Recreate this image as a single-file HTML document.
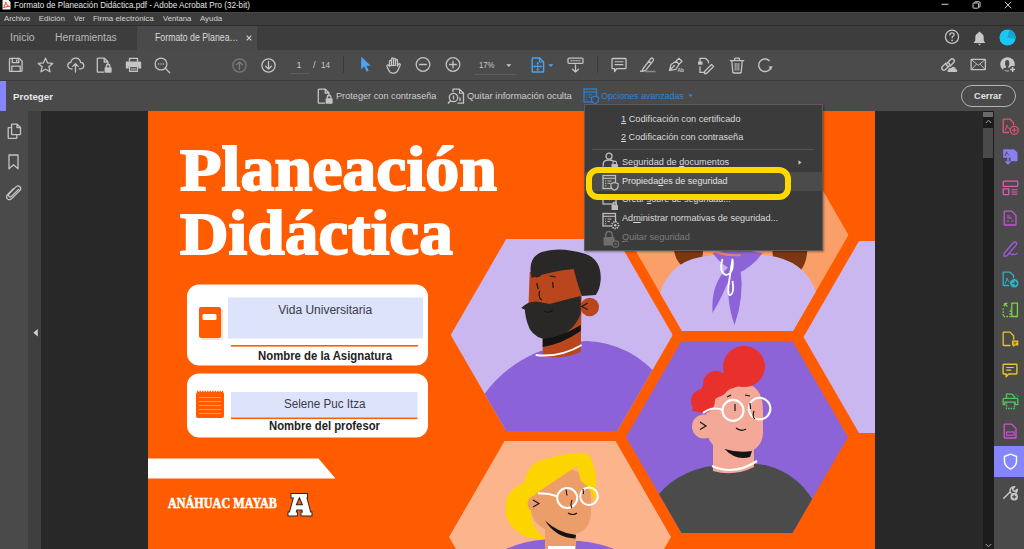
<!DOCTYPE html>
<html><head><meta charset="utf-8">
<style>
*{margin:0;padding:0;box-sizing:border-box}
html,body{width:1024px;height:549px;overflow:hidden;background:#282828;font-family:"Liberation Sans",sans-serif;position:relative}
.a{position:absolute}
.t{position:absolute;white-space:nowrap;line-height:1;transform-origin:0 0}
svg{position:absolute;overflow:visible}
.lc{display:inline-block;transform:scaleY(1.07);transform-origin:0 84%}
.ic{fill:none;stroke:#c4c4c4;stroke-width:1.3;stroke-linecap:round;stroke-linejoin:round}
</style></head><body>
<!-- title bar -->
<div class="a" style="left:0;top:0;width:1024px;height:12px;background:#000"></div>
<!-- menu bar -->
<div class="a" style="left:0;top:12px;width:1024px;height:13px;background:#3c3c3c"></div>
<div class="a" style="left:0;top:12px;width:1024px;height:1px;background:#484848"></div>
<div class="a" style="left:0;top:25px;width:1024px;height:1px;background:#2f2f2f"></div>
<!-- tab bar -->
<div class="a" style="left:0;top:26px;width:1024px;height:24px;background:#3d3d3d"></div>
<div class="a" style="left:137px;top:26px;width:120px;height:24px;background:#4a4a4a"></div>
<!-- toolbar -->
<div class="a" style="left:0;top:50px;width:1024px;height:30px;background:#4b4b4b"></div>
<div class="a" style="left:0;top:80px;width:1024px;height:1px;background:#3c3c3c"></div>
<!-- protect bar -->
<div class="a" style="left:0;top:81px;width:1024px;height:30px;background:#4a4a4a"></div>
<div class="a" style="left:0;top:81px;width:6px;height:30px;background:#8585ff"></div>
<!-- left sidebar -->
<div class="a" style="left:0;top:111px;width:28px;height:438px;background:#4a4a4a"></div>
<div class="a" style="left:28px;top:111px;width:13px;height:438px;background:#3f3f3f"></div>
<!-- scrollbar -->
<div class="a" style="left:982.5px;top:111px;width:12px;height:438px;background:#1c1c1c"></div>
<div class="a" style="left:983px;top:111.5px;width:10px;height:5px;background:#6a6a6a"></div>
<div class="a" style="left:983px;top:128.3px;width:10px;height:29.5px;background:#4a4a4a"></div>
<!-- right sidebar -->
<div class="a" style="left:994px;top:111px;width:30px;height:438px;background:#4a4a4a"></div>
<div class="a" style="left:994px;top:446px;width:30px;height:31px;background:#8585ff"></div>
<!-- page -->
<div class="a" style="left:148px;top:111px;width:727px;height:438px;background:#ff5b00"></div>
<svg style="left:0;top:0" width="1024" height="549" viewBox="0 0 1024 549">
<defs>
<clipPath id="pg"><rect x="148" y="111" width="727" height="438"/></clipPath>
<clipPath id="c1"><polygon points="449.0,335.0 504.5,239.0 615.5,239.0 671.0,335.0 615.5,431.0 504.5,431.0"/></clipPath>
<clipPath id="c2"><polygon points="626.0,234.0 681.5,138.0 792.5,138.0 848.0,234.0 792.5,330.0 681.5,330.0"/></clipPath>
<clipPath id="c3"><polygon points="626.0,436.0 681.5,340.0 792.5,340.0 848.0,436.0 792.5,532.0 681.5,532.0"/></clipPath>
<clipPath id="c4"><polygon points="449.0,537.0 504.5,441.0 615.5,441.0 671.0,537.0 615.5,633.0 504.5,633.0"/></clipPath>
</defs>
<g clip-path="url(#pg)">
<!-- hex 5 right lavender -->
<polygon transform="translate(0.5,2)" points="803.0,335.0 858.5,239.0 969.5,239.0 1025.0,335.0 969.5,431.0 858.5,431.0" fill="#cbb7f0"/>
<!-- hex 1: bearded man -->
<g transform="translate(1.7,0)"><g clip-path="url(#c1)">
<rect x="440" y="230" width="240" height="210" fill="#cbb7f0"/>
<path d="M462 440 Q478 378 534 353 Q558 342 585 341 Q630 343 660 380 Q684 410 690 440 Z" fill="#8c62d8"/>
<path d="M528 272 Q550 266 574 266 L580 296 L579 352 Q560 360 541 356 L541 336 Q524 330 527 300 Z" fill="#b9461d"/>
<circle cx="588" cy="307" r="9.3" fill="#b9461d"/>
<path d="M586 303l-6 3.5 6 3" fill="none" stroke="#1e1e1e" stroke-width="1.2"/>
<path d="M530 278 Q525 258 540 252 Q558 246 584 254 Q600 260 599 280 Q598 290 594 295 L580 296 Q575 282 572 269 Q550 271 530 278 Z" fill="#2a2827"/>
<path d="M523 306 Q535 300 548 304 Q562 300 579 296 L579 314 Q572 332 552 339 Q535 341 528 329 Q523 318 523 306 Z" fill="#2a2827"/>
<path d="M519.5 308 Q528 300 538 302 Q545 305 549 304 Q540 313 528 312 Z" fill="#2a2827"/>
<path d="M541 347 L541 339 Q560 337 579 325 L579 331 Q560 344 541 347 Z" fill="#141414"/>
<path d="M534 355 Q558 358 580 345" fill="none" stroke="#fff" stroke-width="2"/>
<path d="M535 283l1.5 6M551 282l0.5 6M534 277l5-1.5M548 276l6 1M538 291q-2 6 2 9M542 311q5 3 9-1" fill="none" stroke="#141414" stroke-width="1.1"/>
</g>
</g>
<!-- hex 2: woman with bandana -->
<g transform="translate(0.5,1)"><g clip-path="url(#c2)">
<rect x="620" y="130" width="240" height="210" fill="#fb9f68"/>
<path d="M672 240 Q674 268 692 268 Q705 264 702 240 Z" fill="#7d3612"/>
<path d="M807 240 Q808 274 788 274 Q770 272 772 240 Z" fill="#7d3612"/>
<path d="M718 240h40v20h-40z" fill="#f2a08a"/>
<path d="M655 340 L657 300 Q666 262 700 256 Q738 249 776 256 Q810 264 818 300 L820 340 Z" fill="#cbb7f0"/>
<path d="M712 252 Q736 246 762 252 Q752 266 738 272 Q722 266 712 252 Z" fill="#8d63d8"/>
<path d="M728 266 Q710 282 712 312 Q722 296 732 270 Z M730 266 Q724 296 734 324 Q744 296 740 268 Z" fill="#8d63d8"/>
<path d="M716 251 Q725 255 740 254" fill="none" stroke="#e88070" stroke-width="2"/>
<path d="M722 258 Q718 272 726 274 Q734 272 732 258 Q730 270 728 285 Q727 295 730 294 Q734 292 732 280" fill="none" stroke="#fff" stroke-width="1.8"/>
</g>
</g>
<!-- hex 3: red hair man -->
<g transform="translate(0,1)"><g clip-path="url(#c3)">
<rect x="620" y="330" width="240" height="210" fill="#8c64d8"/>
<path d="M640 540 Q648 480 705 466 Q735 460 765 464 Q815 476 828 540 Z" fill="#4b4b4b"/>
<path d="M713 430h41v36q-20 10-41 4z" fill="#f3a898"/>
<path d="M712 465 Q734 475 757 460" fill="none" stroke="#fff" stroke-width="2.2"/>
<path d="M706 410 Q712 383 740 382 Q763 382 763 410 L763 432 Q762 452 738 452 Q714 452 708 436 Z" fill="#f3a898"/>
<circle cx="704" cy="425.5" r="12" fill="#f3a898"/>
<path d="M700 421l6 4-6 3.5" fill="none" stroke="#1e1e1e" stroke-width="1.3"/>
<path d="M724.5 448 Q738 452 752 450 L750 456 Q736 460 724.5 448 Z" fill="#141414"/>
<ellipse cx="744" cy="365.5" rx="21" ry="20.5" fill="#e8302c"/>
<circle cx="716" cy="383" r="13" fill="#e8302c"/>
<circle cx="703" cy="400" r="12" fill="#e8302c"/>
<path d="M692 410 Q700 376 725 372 L745 384 Q730 386 722 394 Q712 398 706 412 Z" fill="#e8302c"/>
<circle cx="733" cy="409.4" r="10.5" fill="none" stroke="#fff" stroke-width="2.1"/>
<circle cx="759.6" cy="407.6" r="10.8" fill="none" stroke="#fff" stroke-width="2.1"/>
<path d="M703 412 Q712 405 723 409" fill="none" stroke="#fff" stroke-width="2.1"/>
<path d="M735 403v7M750 402l0.5 6M727 396l4-2M745 394l5 1M754 410q-2 6 1 8M736 427q5 4 10 1" fill="none" stroke="#141414" stroke-width="1.2"/>
</g>
</g>
<!-- hex 4: blonde woman -->
<g clip-path="url(#c4)">
<rect x="440" y="430" width="240" height="210" fill="#fbb48b"/>
<path d="M506 549 Q524 541 545 539.5 L579.5 541 Q600 543 614 549 Z" fill="#8d63d8"/>
<path d="M545 515h31v35h-31z" fill="#eb9e6a"/>
<path d="M548 547.5h27" stroke="#fff" stroke-width="3"/>
<path d="M530 500 Q532 470 560 468 Q591 468 591 500 L591 515 Q589 534 568 535 Q545 534 534 520 Q530 512 530 500 Z" fill="#eb9e6a"/>
<path d="M530 468 Q536 460 549 458 Q566 453 583 453 Q592 455 592 462 Q597 474 596 483 Q596 495 595 502 L589 488 L581 481 L577 466 L538 492 Q532 496 530 504 L532 520 Q536 532 546 539 Q530 540 521 534 Q506 524 506 513 Q505 500 508 496 Q514 486 524 483 Q526 474 530 468 Z" fill="#fcd400"/>
<circle cx="536" cy="503.7" r="8.5" fill="#eb9e6a"/>
<path d="M533 500l6 3.5-6 3.5" fill="none" stroke="#1e1e1e" stroke-width="1.2"/>
<path d="M545 520.5 Q558 533 576 535 L575.5 538.5 Q556 538 545 520.5 Z" fill="#141414"/>
<circle cx="567.2" cy="498" r="10" fill="none" stroke="#fff" stroke-width="2"/>
<circle cx="589" cy="496.2" r="8.8" fill="none" stroke="#fff" stroke-width="2"/>
<path d="M538 493.3 Q548 493 557.3 496.3" fill="none" stroke="#fff" stroke-width="2"/>
<path d="M566 489.5l1 6M583 489l0.5 5M572 500q-2 5 0 8M568 513q5 3 9 0" fill="none" stroke="#141414" stroke-width="1.1"/>
</g>
<!-- bottom white bar -->
<polygon points="148,458.5 318.5,458.5 335.5,478.5 148,478.5" fill="#ffffff"/>
<!-- info box 1 -->
<rect x="187" y="284.5" width="241" height="81" rx="12" fill="#ffffff"/>
<rect x="228" y="297.5" width="195" height="41" fill="#dce3fb"/>
<rect x="231" y="345" width="187" height="1.6" fill="#ff5b00"/>
<!-- book icon -->
<rect x="201" y="309" width="22" height="31" rx="2" fill="#ffe0cc"/>
<rect x="199" y="307" width="22" height="31" rx="2" fill="#ff5b00"/>
<rect x="202.5" y="314" width="14" height="6" rx="1.5" fill="#ffffff"/>
<!-- info box 2 -->
<rect x="187" y="373.5" width="241" height="64" rx="12" fill="#ffffff"/>
<rect x="231" y="392" width="186.5" height="25.5" fill="#dce3fb"/>
<rect x="231" y="417.5" width="186.5" height="1.6" fill="#ff5b00"/>
<!-- notebook icon -->
<rect x="196" y="392" width="28" height="26" rx="2" fill="#ff5b00"/>
<path d="M197 391.5h26" stroke="#ff5b00" stroke-width="1.5" stroke-dasharray="1.5 1"/>
<path d="M199 397.5h22M199 401.5h22M199 405.5h22M199 409.5h22M199 413.5h22" stroke="#ffa070" stroke-width="0.9"/>
<!-- Anahuac A logo -->
<path d="M291.5 494H307V497.5H306.3L310.3 512.5H311.5V515.5H301.5V512.5H303L302.3 509.5H296.5L295.6 512.5H297V515.5H288.5V512.5H289.8L294 497.5H291.5Z M295.6 505.3H303.2L299.4 496.5Z" fill="#ffffff" fill-rule="evenodd" stroke="#262626" stroke-width="1.9" stroke-linejoin="miter" paint-order="stroke"/>
</g>
</svg>
<div class="t" style="left:179.5px;top:141.17px;font-size:59.5px;color:#ffffff;font-weight:700;font-family:'Liberation Serif',serif;transform:scaleX(1.142);-webkit-text-stroke:1.8px #fff">P<span class='lc'>laneación</span></div>
<div class="t" style="left:179.5px;top:205.47px;font-size:59.5px;color:#ffffff;font-weight:700;font-family:'Liberation Serif',serif;transform:scaleX(1.131);-webkit-text-stroke:1.8px #fff">D<span class='lc'>idáctica</span></div>
<div class="t" style="left:278.3px;top:304.34px;font-size:12px;color:#3a3a48">Vida Universitaria</div>
<div class="t" style="left:258.3px;top:349.54px;font-size:12px;color:#222222;font-weight:700;transform:scaleX(0.946)">Nombre de la Asignatura</div>
<div class="t" style="left:283.5px;top:398.24px;font-size:12px;color:#3a3a48;transform:scaleX(0.970)">Selene Puc Itza</div>
<div class="t" style="left:268.8px;top:419.94px;font-size:12px;color:#222222;font-weight:700;transform:scaleX(0.940)">Nombre del profesor</div>
<div class="t" style="left:167.5px;top:497.23px;font-size:13.7px;color:#ffffff;font-weight:700;font-family:'Liberation Serif',serif;transform:scaleX(0.889);-webkit-text-stroke:0.5px #fff">ANÁHUAC MAYAB</div>
<!-- title bar icons -->
<svg style="left:2px;top:0px" width="9" height="10" viewBox="0 0 9 10"><path d="M0.5 0h6l2 2v7.5h-8z" fill="#f4f4f4"/><path d="M1.5 7.5c1-1.5 2-3.5 2.2-5.5 0.3 2 2 4 3.8 4.5-1.5 0-3.5 0.3-6 1z" fill="none" stroke="#e8401c" stroke-width="1"/></svg>
<svg style="left:941px;top:3px" width="8" height="3" viewBox="0 0 8 3"><path d="M0.5 1.3h7" stroke="#cfcfcf" stroke-width="1"/></svg>
<svg style="left:972px;top:1px" width="9" height="8" viewBox="0 0 9 8"><rect x="1" y="2" width="5.6" height="5.2" rx="0.8" fill="none" stroke="#cfcfcf" stroke-width="1"/><path d="M2.6 1.9v-0.3q0-0.9 0.9-0.9h3.4q1.2 0 1.2 1.2v3.4q0 0.9-0.9 0.9h-0.3" fill="none" stroke="#cfcfcf" stroke-width="1"/></svg>
<svg style="left:1003.5px;top:1px" width="8" height="8" viewBox="0 0 8 8"><path d="M0.8 0.8l6.5 6.5M7.3 0.8l-6.5 6.5" stroke="#cfcfcf" stroke-width="1"/></svg>
<!-- tab bar icons -->
<svg style="left:245.5px;top:35px" width="6" height="6" viewBox="0 0 6 6"><path d="M0.7 0.7l4.6 4.6M5.3 0.7l-4.6 4.6" stroke="#d0d0d0" stroke-width="1.1"/></svg>
<svg style="left:944px;top:29.2px" width="16" height="16" viewBox="0 0 16 16"><circle cx="8" cy="7.8" r="6.6" class="ic"/><path d="M5.9 5.9c0-1.3 1-2 2.1-2s2.1 0.8 2.1 1.9c0 1.5-2 1.6-2 3.1" class="ic" stroke-width="1.4"/><circle cx="8.1" cy="11.3" r="0.9" fill="#c4c4c4"/></svg>
<svg style="left:973px;top:30.5px" width="13" height="15" viewBox="0 0 13 15"><path d="M6.5 0.8c0.8 0 1.2 0.6 1.2 1.2 2.2 0.6 3 2.5 3 4.6v3l1.6 2.4h-11.6l1.6-2.4v-3c0-2.1 0.8-4 3-4.6 0-0.6 0.4-1.2 1.2-1.2z" fill="#c8c8c8"/><path d="M5 12.8h3l-1.5 1.6z" fill="#c8c8c8"/></svg>
<svg style="left:998.5px;top:29px" width="17" height="17" viewBox="0 0 17 17"><circle cx="8.5" cy="8.5" r="8.1" fill="#18c8f2"/><path d="M8.5 8.5 L10.3 0.6 A8.1 8.1 0 0 1 16.6 10 Z" fill="#13a8d2"/></svg>
<!-- toolbar icons -->
<svg style="left:8px;top:57px" width="16" height="16" viewBox="0 0 16 16" class="ic"><path d="M1.5 2.2q0-0.8 0.8-0.8h9l2.8 2.8v9.4q0 0.8-0.8 0.8h-11q-0.8 0-0.8-0.8z"/><path d="M4.3 1.5v4.2h6.4v-4.2M8.7 2.8v1.6"/><path d="M3.8 14.2v-5h8.4v5"/></svg>
<svg style="left:36.5px;top:56.5px" width="17" height="17" viewBox="0 0 17 17" class="ic"><path d="M8.5 1.2l2.1 4.7 5.1 0.5-3.8 3.4 1.1 5-4.5-2.6-4.5 2.6 1.1-5-3.8-3.4 5.1-0.5z"/></svg>
<svg style="left:66.5px;top:57px" width="17" height="16" viewBox="0 0 17 16" class="ic"><path d="M5.2 11.8h-1.2c-1.8 0-3.2-1.4-3.2-3.2 0-1.7 1.3-3.1 3-3.2 0.5-2.4 2.5-4.2 4.9-4.2 2.5 0 4.5 1.8 4.9 4.2 1.8 0.1 3.2 1.5 3.2 3.2 0 1.8-1.4 3.2-3.2 3.2h-1.4"/><path d="M8.5 15v-8.2M5.8 9.4l2.7-2.7 2.7 2.7"/></svg>
<svg style="left:96px;top:56.5px" width="17" height="17" viewBox="0 0 17 17"><path d="M7.5 15.2h-5.6q-0.6 0-0.6-0.6v-12.8q0-0.6 0.6-0.6h6.4l3.6 3.6v3.4M8.2 1.2v3.8h3.7" class="ic"/><rect x="8.6" y="10.2" width="7" height="5.6" rx="0.7" fill="#c4c4c4"/><path d="M10.3 10.2v-1.3q0-1.8 1.8-1.8t1.8 1.8v1.3" class="ic" stroke-width="1.2"/></svg>
<svg style="left:124.5px;top:57px" width="17" height="16" viewBox="0 0 17 16"><path d="M4.5 4.2v-2.8h8v2.8" class="ic"/><path d="M1.8 4.5h13.4q1 0 1 1v6h-3v-2.5h-9.4v2.5h-3v-6q0-1 1-1z" fill="#c4c4c4"/><path d="M4.6 9.4h7.8v5h-7.8z" class="ic"/><path d="M6 11.3h5M6 12.8h5" stroke="#c4c4c4" stroke-width="0.7"/></svg>
<svg style="left:154px;top:56.5px" width="17" height="17" viewBox="0 0 17 17"><circle cx="7" cy="7" r="5.9" class="ic"/><path d="M11.3 11.3l4.4 4.4" class="ic" stroke-width="1.5"/><circle cx="4.6" cy="7" r="0.75" fill="#c4c4c4"/><circle cx="7" cy="7" r="0.75" fill="#c4c4c4"/><circle cx="9.4" cy="7" r="0.75" fill="#c4c4c4"/></svg>
<svg style="left:231.5px;top:58px" width="15" height="15" viewBox="0 0 15 15" class="ic" style="stroke:#7a7a7a"><circle cx="7.5" cy="7.5" r="6.6" stroke="#7a7a7a"/><path d="M7.5 11.5v-7.5M4.6 6.8l2.9-2.9 2.9 2.9" stroke="#7a7a7a"/></svg>
<svg style="left:261px;top:58px" width="15" height="15" viewBox="0 0 15 15" class="ic"><circle cx="7.5" cy="7.5" r="6.6"/><path d="M7.5 3.5v7.5M4.6 8.2l2.9 2.9 2.9-2.9"/></svg>
<div class="a" style="left:290px;top:73px;width:19px;height:1px;background:#5c5c5c"></div>
<div class="a" style="left:342.5px;top:56px;width:1px;height:17px;background:#3a3a3a"></div>
<svg style="left:360px;top:56px" width="11" height="16" viewBox="0 0 11 16"><path d="M1.2 0.8v12.8l3-3 2.6 5.2 2-1-2.5-5h4.5z" fill="#4ba3f2"/></svg>
<svg style="left:385.5px;top:56.5px" width="16" height="17" viewBox="0 0 16 17" class="ic"><path d="M3.5 9.5v-5.2q0-1 1-1t1 1v4M5.5 8.3v-6.3q0-1 1-1t1 1v6.3M7.5 8.3v-6q0-1 1-1t1 1v6M9.5 8.3v-4.8q0-1 1-1t1 1v5.8 q0 0 0.8-1.8q0.6-1 1.5-0.6q0.8 0.5 0.3 1.5l-2.3 5q-1.3 2.7-4.3 2.7h-0.5q-3 0-4.2-2.6l-1.8-4.1q-0.4-1 0.4-1.4q0.9-0.4 1.5 0.6z"/></svg>
<svg style="left:415px;top:57px" width="16" height="16" viewBox="0 0 16 16" class="ic"><circle cx="8" cy="7.5" r="6.8"/><path d="M4.6 7.5h6.8"/></svg>
<svg style="left:444.5px;top:57px" width="16" height="16" viewBox="0 0 16 16" class="ic"><circle cx="8" cy="7.5" r="6.8"/><path d="M4.6 7.5h6.8M8 4.1v6.8"/></svg>
<div class="a" style="left:474px;top:74px;width:42px;height:1px;background:#5c5c5c"></div>
<svg style="left:506px;top:63.5px" width="6" height="4" viewBox="0 0 6 4"><path d="M0.3 0.3h5l-2.5 2.8z" fill="#c8c8c8"/></svg>
<svg style="left:531px;top:56.5px" width="14" height="16" viewBox="0 0 14 16"><path d="M1.2 1.8q0-0.8 0.8-0.8h6.6l4 4v9.2q0 0.8-0.8 0.8h-9.8q-0.8 0-0.8-0.8z" fill="none" stroke="#4ba3f2" stroke-width="1.4"/><path d="M8.5 1v4h4" fill="none" stroke="#4ba3f2" stroke-width="1.2"/><path d="M6.8 5.5v8M2.8 9.5h8" stroke="#4ba3f2" stroke-width="1"/><path d="M5.6 6.7l1.2-1.2 1.2 1.2M5.6 12.3l1.2 1.2 1.2-1.2M4 8.3l-1.2 1.2 1.2 1.2M9.6 8.3l1.2 1.2-1.2 1.2" fill="none" stroke="#4ba3f2" stroke-width="1"/></svg>
<svg style="left:547.5px;top:63.5px" width="6" height="4" viewBox="0 0 6 4"><path d="M0.3 0.3h5l-2.5 2.8z" fill="#4ba3f2"/></svg>
<svg style="left:566.5px;top:57px" width="17" height="16" viewBox="0 0 17 16" class="ic"><rect x="1" y="1.2" width="15" height="5.2" rx="1.2"/><path d="M3.8 3.8h1.6M6.6 3.8h1.6M9.4 3.8h1.6M12.2 3.8h1" stroke-width="1.1"/><path d="M8.5 8v7M5.6 12.2l2.9 2.9 2.9-2.9"/></svg>
<div class="a" style="left:596.5px;top:56px;width:1px;height:17px;background:#3a3a3a"></div>
<svg style="left:610.5px;top:57px" width="16" height="16" viewBox="0 0 16 16" class="ic"><path d="M1.8 1.5h12.4q0.8 0 0.8 0.8v8.6q0 0.8-0.8 0.8h-8.4l-2.2 2.8v-2.8h-1.8q-0.8 0-0.8-0.8v-8.6q0-0.8 0.8-0.8z"/><path d="M4 4.8h8M4 7.6h8" stroke-width="1.1"/></svg>
<svg style="left:639px;top:56.5px" width="18" height="16" viewBox="0 0 18 16"><path d="M4.2 11.5l7.5-9.8q1-1.2 2.2-0.3t0.3 2.2l-7.5 9.8-3.5 1zM9.8 4.2l3 2.2" fill="none" stroke="#c4c4c4" stroke-width="1.3" stroke-linejoin="round"/><path d="M1 14.2h2.5" stroke="#c4c4c4" stroke-width="1.4"/><path d="M6 14.5h10.5" stroke="#8a8a8a" stroke-width="1.6"/></svg>
<svg style="left:668px;top:56.5px" width="17" height="16" viewBox="0 0 17 16"><path d="M1.5 13.5l1.5-6 5-3.2 3 3-3.2 5z M1.5 13.5l3.8-3.8M8 4.3l3-3 3 3-3 3" fill="none" stroke="#c4c4c4" stroke-width="1.25" stroke-linejoin="round"/><circle cx="6" cy="9" r="1" fill="#c4c4c4"/><text x="9.5" y="14.8" font-size="5" font-family="Liberation Sans" font-weight="700" fill="#c4c4c4">Ab</text></svg>
<svg style="left:697px;top:56.5px" width="18" height="17" viewBox="0 0 18 17"><path d="M3 6v-4.7h5.5l3 3v2" fill="none" stroke="#c4c4c4" stroke-width="1.3" stroke-linejoin="round"/><rect x="1" y="4.5" width="4.5" height="3.2" fill="#c4c4c4"/><path d="M3 9.5v5.8h4" fill="none" stroke="#c4c4c4" stroke-width="1.3"/><path d="M7.5 14.5l7-7 2 2-7 7h-2z" fill="none" stroke="#c4c4c4" stroke-width="1.3" stroke-linejoin="round"/></svg>
<svg style="left:728.5px;top:56.5px" width="16" height="17" viewBox="0 0 16 17" class="ic"><path d="M1.2 3.6h13.6M5.6 3.4v-1.6q0-0.6 0.6-0.6h3.6q0.6 0 0.6 0.6v1.6M2.8 3.8l1 11.4q0.1 0.8 0.9 0.8h6.6q0.8 0 0.9-0.8l1-11.4"/><path d="M6.2 6.4v6.8M8 6.4v6.8M9.8 6.4v6.8" stroke-width="0.9"/></svg>
<svg style="left:757px;top:56.5px" width="17" height="17" viewBox="0 0 17 17"><path d="M14.2 9.5a6.3 6.3 0 1 1-1.6-5.6" fill="none" stroke="#c4c4c4" stroke-width="1.4"/><path d="M15.8 9.5h-4.2l2.1 3.4z" fill="#c4c4c4" transform="rotate(0)"/></svg>
<svg style="left:939.5px;top:57px" width="18" height="16" viewBox="0 0 18 16"><path d="M5.8 6.2l-3.3 3.3q-1.6 1.6-0.1 3.1t3.1-0.1l3.3-3.3q1.6-1.6 0.1-3.1M10.3 8.9l3.3-3.3q1.6-1.6 0.1-3.1t-3.1 0.1l-3.3 3.3q-1.6 1.6-0.1 3.1" fill="none" stroke="#c4c4c4" stroke-width="1.4" stroke-linecap="round"/><path d="M8 15h8.5q0.8-0.1 0.8-1.2 0-1.4-1.4-1.5-0.3-2.6-2.6-2.6-1.7 0-2.4 1.6-0.5-0.3-1-0.3-1.4 0-1.5 1.4-0.9 0.2-0.9 1.3 0 1.3 0.5 1.3z" fill="#c4c4c4" stroke="#4b4b4b" stroke-width="0.8" paint-order="stroke"/></svg>
<svg style="left:969.5px;top:58px" width="17" height="13" viewBox="0 0 17 13"><rect x="1.1" y="1.3" width="14.3" height="10.4" rx="0.5" fill="none" stroke="#c4c4c4" stroke-width="1.25"/><path d="M1.4 1.7l6.85 5.6 6.85-5.6M1.4 11.4l5.1-5.3M15.1 11.4l-5.1-5.3" fill="none" stroke="#c4c4c4" stroke-width="0.95"/></svg>
<svg style="left:999.5px;top:57px" width="17" height="17" viewBox="0 0 17 17"><circle cx="7.5" cy="7.4" r="7.2" fill="#c6c6c6"/><ellipse cx="7.2" cy="6.4" rx="2.1" ry="3.3" fill="#4b4b4b"/><path d="M6.2 9h2v2h-2z" fill="#4b4b4b"/><path d="M2.6 12.8 Q3.2 10.6 7.2 10.6 Q11.2 10.6 11.8 12.8 L11.5 13.4 H2.8z" fill="#4b4b4b"/><circle cx="12.6" cy="12.6" r="3.6" fill="#4b4b4b"/><path d="M12.6 10.2v4.8M10.2 12.6h4.8" stroke="#c6c6c6" stroke-width="1.5"/></svg>
<!-- protect bar icons -->
<svg style="left:317px;top:87.5px" width="17" height="17" viewBox="0 0 17 17"><path d="M7.5 15.2h-5.6q-0.6 0-0.6-0.6v-12.8q0-0.6 0.6-0.6h6.4l3.6 3.6v3.4M8.2 1.2v3.8h3.7" class="ic"/><rect x="8.6" y="10.2" width="7" height="5.6" rx="0.7" fill="#c4c4c4"/><path d="M10.3 10.2v-1.3q0-1.8 1.8-1.8t1.8 1.8v1.3" class="ic" stroke-width="1.2"/></svg>
<svg style="left:447px;top:87.5px" width="18" height="17" viewBox="0 0 18 17"><path d="M6 4v-2.8h6.5l4 4v10h-6" fill="none" stroke="#c4c4c4" stroke-width="1.3" stroke-linejoin="round"/><path d="M12.5 1.2v4h4" fill="none" stroke="#c4c4c4" stroke-width="1.1"/><circle cx="6.5" cy="9.5" r="4.2" fill="none" stroke="#c4c4c4" stroke-width="1.3"/><path d="M3.6 12.5l-2.6 3" stroke="#c4c4c4" stroke-width="1.5"/><path d="M6.5 7.5v4" stroke="#c4c4c4" stroke-width="1.2"/><path d="M13 9.5v3.5" stroke="#9a9a9a" stroke-width="2"/></svg>
<svg style="left:583px;top:87.5px" width="17" height="17" viewBox="0 0 17 17"><rect x="1" y="1" width="12.5" height="13" fill="none" stroke="#2b7fd0" stroke-width="1.3"/><path d="M1 4h12.5" stroke="#2b7fd0" stroke-width="1.3"/><path d="M3 6.8h1.2M5.5 6.8h4M3 9.2h1.2M5.5 9.2h2.5M3 11.6h1.2" stroke="#2b7fd0" stroke-width="1"/><path d="M12 8.2l3.5 1.2v2.6q0 2.5-3.5 3.8-3.5-1.3-3.5-3.8v-2.6z" fill="#474747" stroke="#2b7fd0" stroke-width="1.2"/></svg>
<svg style="left:688px;top:94px" width="5" height="4" viewBox="0 0 5 4"><path d="M0.2 0.5h4.6l-2.3 2.6z" fill="#2b87d8"/></svg>
<div class="a" style="left:961px;top:85px;width:54.5px;height:21.5px;border:1.3px solid #b4b4b4;border-radius:11px"></div>
<!-- left sidebar icons -->
<svg style="left:7px;top:123px" width="15" height="17" viewBox="0 0 15 17" class="ic"><path d="M4.6 11.6v-10q0-0.5 0.5-0.5h5l3.4 3.4v6.6q0 0.5-0.5 0.5h-7.9q-0.5 0-0.5-0.5zM10 1.2v3.4h3.4"/><path d="M4.4 4.6h-2.6q-0.6 0-0.6 0.6v9.6q0 0.6 0.6 0.6h7.4q0.6 0 0.6-0.6v-2.6"/></svg>
<svg style="left:8px;top:154px" width="11" height="16" viewBox="0 0 11 16" class="ic"><path d="M1 1h9v13.8l-4.5-4-4.5 4z"/></svg>
<svg style="left:6px;top:184px" width="15" height="17" viewBox="0 0 15 17" class="ic" stroke-width="1.5"><path d="M12.5 5.5l-6.8 6.8q-1.4 1.4-2.7 0.1t0.1-2.7l6.6-6.6q2.3-2.3 4.2-0.4t-0.4 4.2l-7.2 7.2q-2.8 2.8-4.9 0.8t0.8-4.9l5.5-5.5"/></svg>
<svg style="left:32.5px;top:328.5px" width="5" height="8" viewBox="0 0 5 8"><path d="M4.8 0.1v7.4l-4.5-3.7z" fill="#d0d0d0"/></svg>
<!-- scrollbar arrows -->
<svg style="left:985px;top:119px" width="7" height="5" viewBox="0 0 7 5"><path d="M0.8 4l2.7-2.8 2.7 2.8" fill="none" stroke="#aaaaaa" stroke-width="1"/></svg>
<svg style="left:985px;top:543px" width="7" height="5" viewBox="0 0 7 5"><path d="M0.8 1l2.7 2.8 2.7-2.8" fill="none" stroke="#aaaaaa" stroke-width="1"/></svg>
<!-- right sidebar tool icons -->
<svg style="left:1001.5px;top:118px" width="17" height="17" viewBox="0 0 17 17"><path d="M7 14.5h-5.2q-0.6 0-0.6-0.6v-12.2q0-0.6 0.6-0.6h6.2l3.6 3.6v2.6" fill="none" stroke="#e9506e" stroke-width="1.3" stroke-linejoin="round"/><path d="M3 12.5c1-1.5 1.8-3.4 2-5.3 0.3 1.8 1.5 3.5 3.5 4" fill="none" stroke="#e9506e" stroke-width="1"/><circle cx="12.3" cy="12.3" r="4" fill="none" stroke="#e9506e" stroke-width="1.3"/><path d="M12.3 10v4.6M10 12.3h4.6" stroke="#e9506e" stroke-width="1.1"/></svg>
<svg style="left:1001.5px;top:148px" width="17" height="17" viewBox="0 0 17 17"><path d="M1.2 1.8q0-0.6 0.6-0.6h6l3 3v5.5h-9.6z" fill="#8a7ff2"/><path d="M8.5 1.2q0-0 0 0h3.5l3.5 3.5v8.5h-7z" fill="#8a7ff2"/><path d="M3 8c0.8-1.3 1.4-2.8 1.5-4.3 0.3 1.5 1.2 2.8 2.8 3.3" fill="none" stroke="#474747" stroke-width="0.9"/><path d="M6 9.5v6M3.5 13.3l2.5 2.5 2.5-2.5" fill="none" stroke="#8a7ff2" stroke-width="1.4"/></svg>
<svg style="left:1001.5px;top:179.5px" width="17" height="16" viewBox="0 0 17 16"><rect x="1.2" y="1.2" width="14.6" height="5.2" rx="0.8" fill="none" stroke="#e35ab2" stroke-width="1.3"/><rect x="1.2" y="8.8" width="5.6" height="5.8" rx="0.6" fill="none" stroke="#e35ab2" stroke-width="1.3"/><path d="M9.5 9.8h6M9.5 12h6M9.5 14.2h6" stroke="#e35ab2" stroke-width="1"/></svg>
<svg style="left:1002.5px;top:210px" width="15" height="16" viewBox="0 0 15 16"><path d="M1.2 1.8q0-0.6 0.6-0.6h7l4.2 4.2v9q0 0.6-0.6 0.6h-10.6q-0.6 0-0.6-0.6z" fill="none" stroke="#c950da" stroke-width="1.3" stroke-linejoin="round"/><path d="M4 6h3M4 8h5M4 11h2M8.5 11h2" stroke="#c950da" stroke-width="1.1"/></svg>
<svg style="left:1001.5px;top:239.5px" width="17" height="17" viewBox="0 0 17 17"><path d="M2 13.5l9.5-11q1.3-1.3 2.6 0t0 2.6l-9.5 11h-2.6z" fill="none" stroke="#a65ae0" stroke-width="1.3" stroke-linejoin="round"/><path d="M6.5 14.8q1.5-2 2.5-0.5t2.2-0.5q1 1.5 2.5 0.3t2 0.2" fill="none" stroke="#a65ae0" stroke-width="1.1"/></svg>
<svg style="left:1001.5px;top:270.5px" width="17" height="17" viewBox="0 0 17 17"><path d="M7 14.5h-5.2q-0.6 0-0.6-0.6v-12.2q0-0.6 0.6-0.6h6.2l3.6 3.6v2.6" fill="none" stroke="#2ab5c9" stroke-width="1.3" stroke-linejoin="round"/><path d="M3 12.5c1-1.5 1.8-3.4 2-5.3 0.3 1.8 1.5 3.5 3.5 4" fill="none" stroke="#2ab5c9" stroke-width="1"/><circle cx="12.3" cy="12.3" r="4.2" fill="#2ab5c9"/><path d="M10 12.3h4.2M12.5 10.2l2 2.1-2 2.1" fill="none" stroke="#474747" stroke-width="1.1"/></svg>
<svg style="left:1001.5px;top:301.5px" width="17" height="16" viewBox="0 0 17 16"><path d="M1.2 6.5v8h7v-8M1.2 4v-0.5M3.5 1.2h1" fill="none" stroke="#7dd33f" stroke-width="1.3" stroke-dasharray="1.6 1.2"/><path d="M9.8 1.2h5.6v13.3h-5.6z" fill="none" stroke="#7dd33f" stroke-width="1.3"/><path d="M2.5 1.5l3 3M2.5 4.5v-3h3" fill="none" stroke="#7dd33f" stroke-width="1.1"/></svg>
<svg style="left:1001.5px;top:331px" width="17" height="17" viewBox="0 0 17 17"><path d="M8.5 14.5h-6.7q-0.6 0-0.6-0.6v-12.2q0-0.6 0.6-0.6h6.2l3.6 3.6v4" fill="none" stroke="#ebc12a" stroke-width="1.3" stroke-linejoin="round"/><path d="M10 9.5h6.3v5h-3.3l-1.8 1.8v-1.8h-1.2z" fill="#ebc12a"/><path d="M11.5 11.3h3.3M11.5 12.8h2.5" stroke="#474747" stroke-width="0.8"/></svg>
<svg style="left:1002px;top:362.5px" width="16" height="16" viewBox="0 0 16 16"><path d="M1.8 1.2h12.4q0.7 0 0.7 0.7v8.4q0 0.7-0.7 0.7h-7.6l-2.4 2.8v-2.8h-2.4q-0.7 0-0.7-0.7v-8.4q0-0.7 0.7-0.7z" fill="none" stroke="#ebc12a" stroke-width="1.4" stroke-linejoin="round"/><path d="M4.2 4.5h7.6M4.2 7.2h5" stroke="#ebc12a" stroke-width="1.2"/></svg>
<svg style="left:1001.5px;top:392.5px" width="17" height="17" viewBox="0 0 17 17"><path d="M4.5 5v-3.8h5.5l2.5 2.5v1.3" fill="none" stroke="#52c65a" stroke-width="1.3"/><path d="M1.2 6.2q0-0.9 0.9-0.9h12.8q0.9 0 0.9 0.9v5.5h-2.6v-2.5h-10.4v2.5h-1.6z" fill="none" stroke="#52c65a" stroke-width="1.3"/><path d="M4.5 9.2v6.3h8v-6.3" fill="none" stroke="#52c65a" stroke-width="1.3" stroke-dasharray="1.6 1"/><path d="M14 1.5l1 1M15.5 4l1-0.5" stroke="#52c65a" stroke-width="0.9"/></svg>
<svg style="left:1002.5px;top:422.5px" width="15" height="16" viewBox="0 0 15 16"><path d="M1.2 1.8q0-0.6 0.6-0.6h7l4.2 4.2v9q0 0.6-0.6 0.6h-10.6q-0.6 0-0.6-0.6z" fill="none" stroke="#d350d8" stroke-width="1.3" stroke-linejoin="round"/><rect x="3.6" y="9" width="7.5" height="3.2" fill="none" stroke="#d350d8" stroke-width="1.1"/></svg>
<svg style="left:1002.5px;top:452.5px" width="15" height="17" viewBox="0 0 15 17"><path d="M7.5 1.2l6 2.3v4.8q0 5-6 7.8-6-2.8-6-7.8v-4.8z" fill="none" stroke="#ffffff" stroke-width="1.4" stroke-linejoin="round"/></svg>
<svg style="left:1002px;top:484.5px" width="17" height="16" viewBox="0 0 17 16"><path d="M1.8 13.2l6-6M8.6 7.6q-1.2-2.2 0.3-4.3 1.5-1.7 3.8-1.5l-2 2 0.6 1.9 1.9 0.6 2-2q0.3 2.3-1.5 3.8-1.7 1.2-3.7 0.5" fill="none" stroke="#c8c8c8" stroke-width="1.5" stroke-linecap="round" stroke-linejoin="round"/><circle cx="12.2" cy="11.8" r="3.8" fill="#c8c8c8"/><path d="M12.2 9.8v4M10.2 11.8h4" stroke="#474747" stroke-width="1.2"/></svg>
<div class="t" style="left:14px;top:0.97px;font-size:8.3px;color:#e6e6e6;transform:scaleX(0.978)">Formato de Planeación Didáctica.pdf - Adobe Acrobat Pro (32-bit)</div>
<div class="t" style="left:3.8px;top:15.43px;font-size:8px;color:#d4d4d4;transform:scaleX(0.974)">Archivo</div>
<div class="t" style="left:38.7px;top:15.43px;font-size:8px;color:#d4d4d4">Edición</div>
<div class="t" style="left:73.6px;top:15.43px;font-size:8px;color:#d4d4d4;transform:scaleX(0.899)">Ver</div>
<div class="t" style="left:93px;top:15.43px;font-size:8px;color:#d4d4d4;transform:scaleX(0.989)">Firma electrónica</div>
<div class="t" style="left:162.5px;top:15.43px;font-size:8px;color:#d4d4d4;transform:scaleX(0.960)">Ventana</div>
<div class="t" style="left:199.5px;top:15.43px;font-size:8px;color:#d4d4d4;transform:scaleX(0.985)">Ayuda</div>
<div class="t" style="left:9.6px;top:32.83px;font-size:10px;color:#b9b9b9;transform:scaleX(1.057)">Inicio</div>
<div class="t" style="left:55px;top:32.83px;font-size:10px;color:#b9b9b9;transform:scaleX(1.029)">Herramientas</div>
<div class="t" style="left:155.2px;top:33.03px;font-size:10px;color:#dadada;transform:scaleX(0.876)">Formato de Planea…</div>
<div class="t" style="left:13px;top:91.87px;font-size:9.6px;color:#e8e8e8;font-weight:700;transform:scaleX(1.014)">Proteger</div>
<div class="t" style="left:335.5px;top:90.77px;font-size:9.6px;color:#cccccc;transform:scaleX(0.956)">Proteger con contraseña</div>
<div class="t" style="left:466.7px;top:90.77px;font-size:9.6px;color:#cccccc;transform:scaleX(0.983)">Quitar información oculta</div>
<div class="t" style="left:601px;top:90.77px;font-size:9.6px;color:#2b87d8;transform:scaleX(0.924)">Opciones avanzadas</div>
<div class="t" style="left:974px;top:91.37px;font-size:9.6px;color:#e0e0e0;font-weight:700;transform:scaleX(0.965)">Cerrar</div>
<div class="t" style="left:296.5px;top:60.88px;font-size:9px;color:#c8c8c8">1</div>
<div class="t" style="left:313px;top:60.88px;font-size:9px;color:#c8c8c8">/</div>
<div class="t" style="left:321px;top:60.88px;font-size:9px;color:#c8c8c8;transform:scaleX(0.899)">14</div>
<div class="t" style="left:479px;top:60.88px;font-size:9px;color:#c8c8c8;transform:scaleX(0.860)">17%</div>
<!-- dropdown menu -->
<div class="a" style="left:583.5px;top:103.5px;width:239px;height:147.5px;background:#3b3b3b;border:1px solid #5c5c5c;box-shadow:1px 1px 2px rgba(0,0,0,0.35)"></div>
<div class="a" style="left:592px;top:149px;width:222px;height:1px;background:#545454"></div>
<div class="a" style="left:584.5px;top:172px;width:237px;height:18.5px;background:#4b4b4b"></div>
<svg style="left:797.5px;top:159.5px" width="4" height="5" viewBox="0 0 4 5"><path d="M0.5 0.3v4.4l3-2.2z" fill="#c8c8c8"/></svg>
<!-- menu icons -->
<svg style="left:601.5px;top:152px" width="18" height="18" viewBox="0 0 18 18"><circle cx="7" cy="4.2" r="3" fill="none" stroke="#bdbdbd" stroke-width="1.3"/><path d="M1.2 14.5v-2.5q0-4 5.8-4q3 0 4.5 1.2" fill="none" stroke="#bdbdbd" stroke-width="1.3"/><rect x="9.5" y="12" width="6.5" height="5" rx="0.6" fill="#bdbdbd"/><path d="M11 12v-1.3q0-1.6 1.75-1.6t1.75 1.6v1.3" fill="none" stroke="#bdbdbd" stroke-width="1.1"/></svg>
<svg style="left:601.5px;top:174px" width="18" height="18" viewBox="0 0 18 18"><rect x="1" y="1.5" width="12.5" height="13" fill="none" stroke="#bdbdbd" stroke-width="1.3"/><path d="M1 4.3h12.5" stroke="#bdbdbd" stroke-width="1.2"/><path d="M3 7h1.2M5.5 7h4M3 9.4h1.2M5.5 9.4h2.5M3 11.8h1.2" stroke="#bdbdbd" stroke-width="1"/><path d="M12.5 8.5l3.6 1.2v2.6q0 2.6-3.6 3.9-3.6-1.3-3.6-3.9v-2.6z" fill="#4b4b4b" stroke="#bdbdbd" stroke-width="1.2"/></svg>
<svg style="left:601.5px;top:193px" width="18" height="18" viewBox="0 0 18 18"><rect x="1" y="2" width="13" height="9" fill="none" stroke="#bdbdbd" stroke-width="1.3"/><path d="M1.3 2.3l6.2 4.5 6.2-4.5" fill="none" stroke="#bdbdbd" stroke-width="1"/><rect x="9.5" y="12" width="6.5" height="5" rx="0.6" fill="#bdbdbd"/><path d="M11 12v-1.3q0-1.6 1.75-1.6t1.75 1.6v1.3" fill="none" stroke="#bdbdbd" stroke-width="1.1"/></svg>
<svg style="left:601.5px;top:211.5px" width="18" height="18" viewBox="0 0 18 18"><rect x="1" y="1.5" width="12.5" height="12.5" fill="none" stroke="#bdbdbd" stroke-width="1.3"/><path d="M1 4.3h12.5" stroke="#bdbdbd" stroke-width="1.2"/><path d="M3 7h1.2M5.5 7h4M3 9.4h1.2M5.5 9.4h2.5M3 11.8h1.2" stroke="#bdbdbd" stroke-width="1"/><circle cx="13.2" cy="13.2" r="3.3" fill="#3b3b3b" stroke="#bdbdbd" stroke-width="1.8" stroke-dasharray="1.3 0.9"/><circle cx="13.2" cy="13.2" r="1.2" fill="#bdbdbd"/></svg>
<svg style="left:601.5px;top:230px" width="18" height="18" viewBox="0 0 18 18"><rect x="1.5" y="7" width="11" height="8.5" rx="1" fill="#6e6e6e"/><path d="M3.8 7v-2.2q0-3.2 3.2-3.2t3.2 3.2v2.2" fill="none" stroke="#6e6e6e" stroke-width="1.5"/><circle cx="13.5" cy="14" r="3.2" fill="#3b3b3b" stroke="#6e6e6e" stroke-width="1.2"/><path d="M12.2 12.7l2.6 2.6M14.8 12.7l-2.6 2.6" stroke="#6e6e6e" stroke-width="1"/></svg>
<div class="t" style="left:621.4px;top:113.57px;font-size:9.6px;color:#dadada;transform:scaleX(0.958)"><u>1</u> Codificación con certificado</div>
<div class="t" style="left:621.4px;top:132.27px;font-size:9.6px;color:#dadada;transform:scaleX(0.951)"><u>2</u> Codificación con contraseña</div>
<div class="t" style="left:621.8px;top:157.17px;font-size:9.6px;color:#dadada;transform:scaleX(0.957)">Seguridad de <u>d</u>ocumentos</div>
<div class="t" style="left:621.8px;top:176.27px;font-size:9.6px;color:#e2e2e2;transform:scaleX(0.942)">Propieda<u>d</u>es de seguridad</div>
<div class="t" style="left:621.8px;top:194.47px;font-size:9.6px;color:#dadada;transform:scaleX(0.931)">Crear <u>s</u>obre de seguridad...</div>
<div class="t" style="left:621.8px;top:213.07px;font-size:9.6px;color:#dadada;transform:scaleX(0.950)">Ad<u>m</u>inistrar normativas de seguridad...</div>
<div class="t" style="left:621.8px;top:231.87px;font-size:9.6px;color:#7c7c7c;transform:scaleX(0.956)"><u>Q</u>uitar seguridad</div>
<!-- yellow annotation -->
<div class="a" style="left:585.5px;top:166.5px;width:205.5px;height:33px;border:6.5px solid #ffd800;border-radius:12px"></div>

</body></html>
